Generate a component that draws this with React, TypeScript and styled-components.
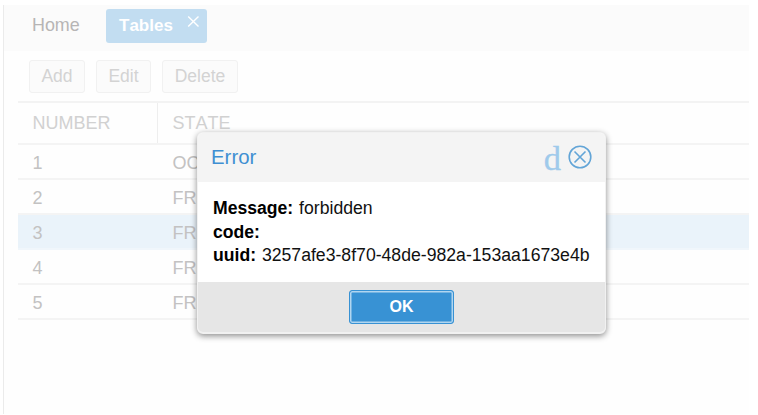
import React from "react";
import styled, { createGlobalStyle } from "styled-components";

const GlobalStyle = createGlobalStyle`
  *, *::before, *::after { box-sizing: border-box; }
  body {
    margin: 0;
    background: #fff;
    font-family: "Liberation Sans", Arial, sans-serif;
    font-kerning: none;
    overflow: hidden;
  }
  button { font-family: inherit; font-kerning: none; }
`;

const Page = styled.div`
  width: 758px;
  height: 415px;
  padding: 5px 9px 1px 3px;
  position: relative;
`;

const Workspace = styled.main`
  height: 409px;
  background: #fefefe;
  border-left: 1px solid #ebebeb;
`;

const TabBar = styled.nav`
  display: flex;
  align-items: flex-start;
  height: 46px;
  padding: 4px 0 0 28px;
  background: #fbfbfb;
`;

const Tab = styled.div<{ $active?: boolean }>`
  display: flex;
  height: 34px;
  line-height: 33px;
  border-radius: 3px;
  font-size: ${(p) => (p.$active ? "17px" : "17.9px")};
  font-weight: ${(p) => (p.$active ? 700 : 400)};
  color: ${(p) => (p.$active ? "#fff" : "#b7b5b5")};
  background: ${(p) => (p.$active ? "#c2ddf1" : "transparent")};
  width: ${(p) => (p.$active ? "101px" : "74px")};
  padding-left: ${(p) => (p.$active ? "13px" : "0")};
`;

const TabClose = styled.svg`
  width: 13px;
  height: 13px;
  margin: 6px 0 0 14px;
`;

const Toolbar = styled.div`
  display: flex;
  height: 50px;
  padding: 9px 0 0 25px;
  gap: 11px;
`;

const ToolButton = styled.button<{ $width: number }>`
  width: ${(p) => p.$width}px;
  height: 33px;
  padding: 0;
  border: 1px solid #f1f1f1;
  border-radius: 3px;
  background: #fbfbfb;
  color: #d3d3d3;
  font-size: 17.5px;
`;

const Grid = styled.div`
  margin-left: 14px;
  border-top: 2px solid #f3f3f3;
  color: #c3c2c2;
  font-size: 18px;
`;

const GridRow = styled.div<{ $selected?: boolean }>`
  display: grid;
  grid-template-columns: 140px 1fr;
  height: 35px;
  line-height: 37px;
  border-bottom: 2px solid ${(p) => (p.$selected ? "#f0f6fb" : "#f4f4f4")};
  background: ${(p) => (p.$selected ? "#eaf3fa" : "transparent")};
`;

const GridHeader = styled(GridRow)`
  height: 42px;
  line-height: 40px;
  color: #d1d1d1;
`;

const Cell = styled.div<{ $divided?: boolean }>`
  padding-left: 14.5px;
  border-right: ${(p) => (p.$divided ? "1px solid #eeeeee" : "0")};
`;

const Dialog = styled.section`
  position: absolute;
  left: 197px;
  top: 132px;
  width: 409px;
  height: 202px;
  border: 1px solid #f1f1f1;
  border-bottom-width: 2px;
  border-radius: 6px;
  overflow: hidden;
  background: #fff;
  box-shadow: 0 2px 6px rgba(0, 0, 0, 0.45);
`;

const DialogHeader = styled.header`
  display: flex;
  align-items: center;
  height: 49px;
  padding: 0 13px 0 13px;
  background: #f4f4f4;
`;

const DialogTitle = styled.h1`
  flex: 1;
  margin: 0;
  font-size: 20.4px;
  font-weight: 400;
  color: #3f8fd2;
`;

const ToolGlyph = styled.span`
  font-family: "Liberation Serif", serif;
  font-size: 34.5px;
  line-height: 38px;
  color: #9fcaeb;
  -webkit-text-stroke: 0.3px #9fcaeb;
  margin-right: 7px;
`;

const CloseIcon = styled.svg`
  width: 24px;
  height: 24px;
  margin-top: -1px;
`;

const DialogBody = styled.div`
  height: 100px;
  padding: 15px 0 0 15px;
  font-size: 17.65px;
  line-height: 23.7px;
  color: #111;
`;

const Line = styled.div`
  white-space: nowrap;
`;

const Label = styled.b`
  font-size: 17.6px;
  margin-right: 1px;
  color: #000;
`;

const DialogFooter = styled.footer`
  display: flex;
  justify-content: center;
  height: 50px;
  padding-top: 8px;
  background: #e6e6e6;
`;

const OkButton = styled.button`
  width: 105px;
  height: 34px;
  padding: 0;
  border: 1px solid #3892d4;
  border-radius: 3px;
  background: #3892d4;
  box-shadow: inset 0 0 0 1.5px #b1d6f0;
  color: #fff;
  font-size: 16px;
  font-weight: 700;
`;

const rows = [
  { number: 1, state: "OC" },
  { number: 2, state: "FR" },
  { number: 3, state: "FR" },
  { number: 4, state: "FR" },
  { number: 5, state: "FR" },
];

export default function App() {
  return (
    <Page>
      <GlobalStyle />
      <Workspace>
        <TabBar>
          <Tab>Home</Tab>
          <Tab $active>
            Tables
            <TabClose viewBox="0 0 13 13" fill="none" stroke="#fff" strokeWidth="1.4">
              <path d="M1.2 1.5 11.5 11.5M11.5 1.5 1.2 11.5" />
            </TabClose>
          </Tab>
        </TabBar>
        <Toolbar>
          <ToolButton $width={56}>Add</ToolButton>
          <ToolButton $width={55}>Edit</ToolButton>
          <ToolButton $width={76}>Delete</ToolButton>
        </Toolbar>
        <Grid>
          <GridHeader>
            <Cell $divided>NUMBER</Cell>
            <Cell>STATE</Cell>
          </GridHeader>
          {rows.map((row) => (
            <GridRow key={row.number} $selected={row.number === 3}>
              <Cell>{row.number}</Cell>
              <Cell>{row.state}</Cell>
            </GridRow>
          ))}
        </Grid>
      </Workspace>
      <Dialog role="dialog">
        <DialogHeader>
          <DialogTitle>Error</DialogTitle>
          <ToolGlyph>d</ToolGlyph>
          <CloseIcon viewBox="0 0 24 24" fill="none" stroke="#63a5d7" strokeWidth="1.6">
            <circle cx="12" cy="12" r="10.8" />
            <path d="M6.5 6.5 17.5 17.5M17.5 6.5 6.5 17.5" />
          </CloseIcon>
        </DialogHeader>
        <DialogBody>
          <Line><Label>Message:</Label> forbidden</Line>
          <Line><Label>code:</Label></Line>
          <Line><Label>uuid:</Label> 3257afe3-8f70-48de-982a-153aa1673e4b</Line>
        </DialogBody>
        <DialogFooter>
          <OkButton>OK</OkButton>
        </DialogFooter>
      </Dialog>
    </Page>
  );
}
